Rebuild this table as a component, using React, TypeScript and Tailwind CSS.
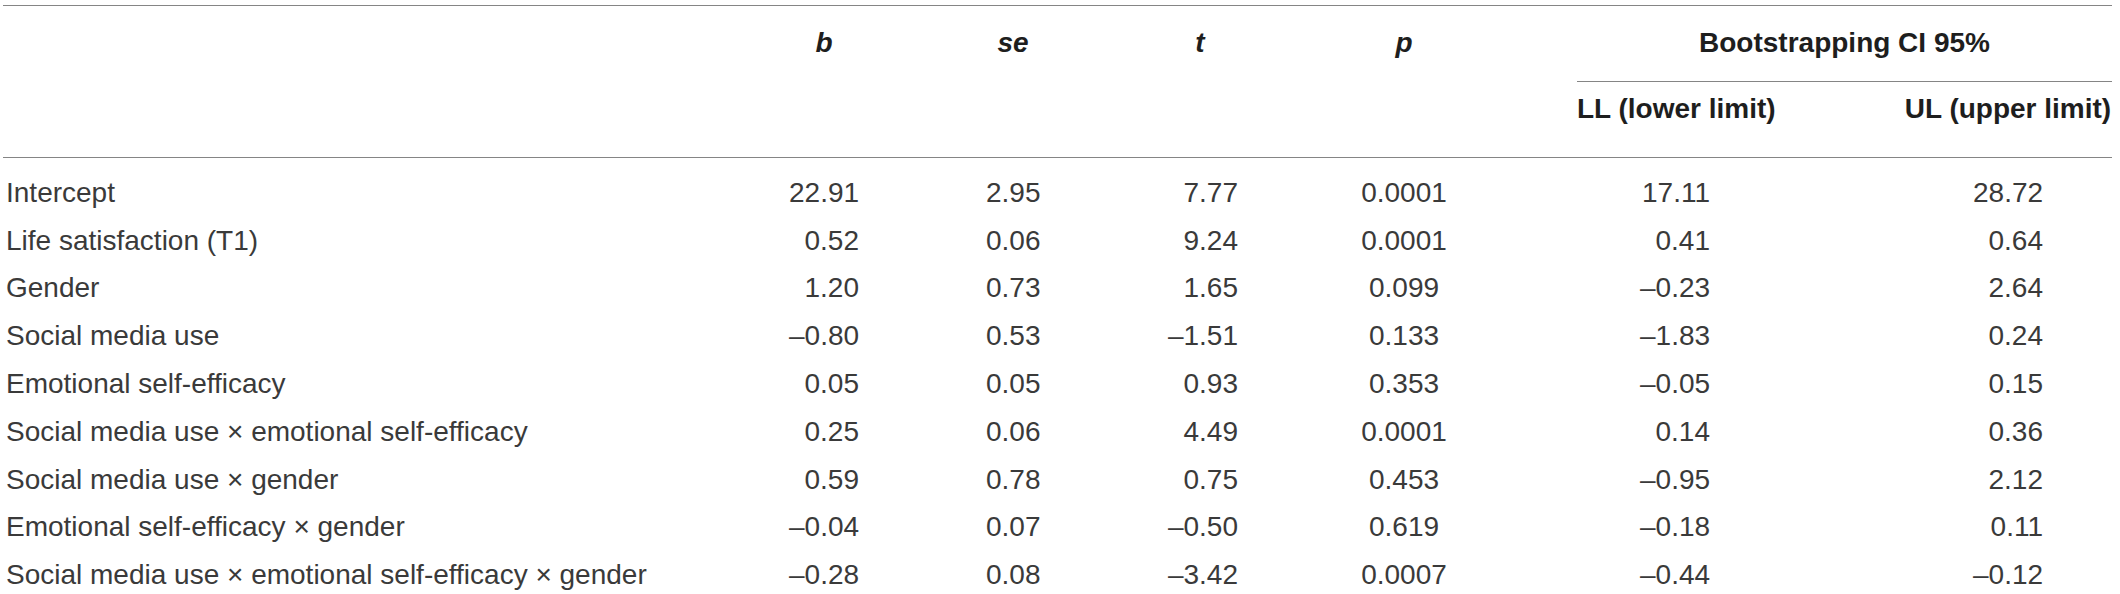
type Row = {
  label: string
  b: string
  se: string
  t: string
  p: string
  ll: string
  ul: string
}

const rows: Row[] = [
  { label: 'Intercept', b: '22.91', se: '2.95', t: '7.77', p: '0.0001', ll: '17.11', ul: '28.72' },
  { label: 'Life satisfaction (T1)', b: '0.52', se: '0.06', t: '9.24', p: '0.0001', ll: '0.41', ul: '0.64' },
  { label: 'Gender', b: '1.20', se: '0.73', t: '1.65', p: '0.099', ll: '–0.23', ul: '2.64' },
  { label: 'Social media use', b: '–0.80', se: '0.53', t: '–1.51', p: '0.133', ll: '–1.83', ul: '0.24' },
  { label: 'Emotional self-efficacy', b: '0.05', se: '0.05', t: '0.93', p: '0.353', ll: '–0.05', ul: '0.15' },
  { label: 'Social media use × emotional self-efficacy', b: '0.25', se: '0.06', t: '4.49', p: '0.0001', ll: '0.14', ul: '0.36' },
  { label: 'Social media use × gender', b: '0.59', se: '0.78', t: '0.75', p: '0.453', ll: '–0.95', ul: '2.12' },
  { label: 'Emotional self-efficacy × gender', b: '–0.04', se: '0.07', t: '–0.50', p: '0.619', ll: '–0.18', ul: '0.11' },
  { label: 'Social media use × emotional self-efficacy × gender', b: '–0.28', se: '0.08', t: '–3.42', p: '0.0007', ll: '–0.44', ul: '–0.12' },
]

// label | b | se | t | p | LL | spacer | UL
const cols = 'grid grid-cols-[727px_188px_190px_184px_224px_324px_64px_208px]'

function Num({ value, width }: { value: string; width: string }) {
  return (
    <div className="flex justify-center">
      <span className={`${width} whitespace-nowrap text-right`}>{value}</span>
    </div>
  )
}

export default function App() {
  return (
    <div className="h-[594px] w-[2120px] overflow-hidden bg-white pt-[5px] text-[28px] leading-[32px] text-[#3a3a3a]" style={{ fontFamily: '"Liberation Sans", Arial, sans-serif' }}>
      <div className="ml-[3px] w-[2109px] border-t border-[#858585]">
        <div className={`${cols} grid-rows-[auto_auto] border-b border-[#858585] font-bold text-[#1e1e1e]`}>
          <div className="row-span-2" />
          <div className="row-span-2 pt-[21px] text-center italic">b</div>
          <div className="row-span-2 pt-[21px] text-center italic">se</div>
          <div className="row-span-2 pt-[21px] text-center italic">t</div>
          <div className="row-span-2 pt-[21px] text-center italic">p</div>
          <div className="col-span-3 ml-[61px] whitespace-nowrap border-b border-[#858585] pb-[22px] pt-[21px] text-center">Bootstrapping CI 95%</div>
          <div className="col-start-6 whitespace-nowrap pb-[32px] pl-[61px] pt-[11px]">LL (lower limit)</div>
          <div className="col-start-8 whitespace-nowrap pb-[32px] pt-[11px] text-center">UL (upper limit)</div>
        </div>

        <div className="pt-[11px]">
          {rows.map((r) => (
            <div key={r.label} className={`${cols} h-[47.8px] items-center whitespace-nowrap`}>
              <div className="pl-[3px]">{r.label}</div>
              <Num value={r.b} width="w-[70px]" />
              <Num value={r.se} width="w-[54px]" />
              <Num value={r.t} width="w-[76px]" />
              <div className="text-center">{r.p}</div>
              <div className="flex justify-center">
                <span className="mr-[6px] w-[70px] text-right">{r.ll}</span>
              </div>
              <div />
              <Num value={r.ul} width="w-[70px]" />
            </div>
          ))}
        </div>
      </div>
    </div>
  )
}
